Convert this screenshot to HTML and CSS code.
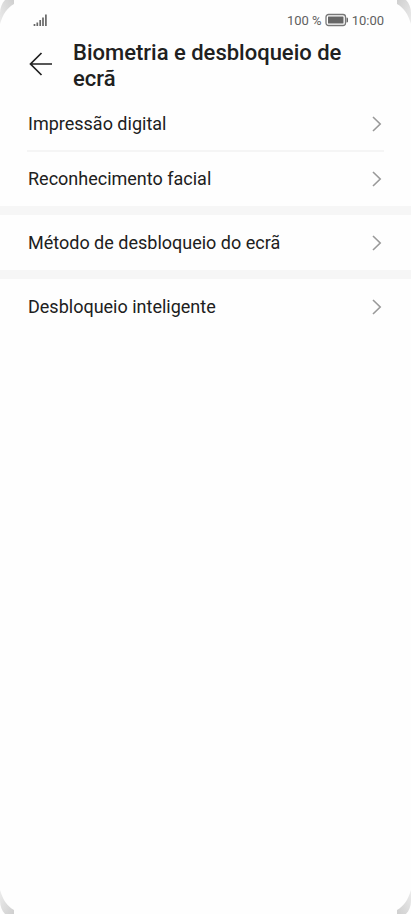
FILE: index.html
```html
<!DOCTYPE html>
<html lang="pt">
<head>
<meta charset="utf-8">
<meta name="viewport" content="width=device-width, initial-scale=1">
<title>Biometria e desbloqueio de ecrã</title>
<link rel="stylesheet" href="styles.css">
</head>
<body>
<svg class="corner top left" viewBox="0 0 14 26" aria-hidden="true"><defs><linearGradient id="edge" x1="1" y1="0" x2="0" y2="1"><stop offset="0" stop-color="#cfcfcf"/><stop offset="1" stop-color="#ececec"/></linearGradient></defs><path fill="url(#edge)" d="M5 0H14V4C7 8 3 14 0 24V13C0 8 2 3 5 0Z"/></svg>
<svg class="corner top right" viewBox="0 0 14 26" aria-hidden="true"><path fill="url(#edge)" d="M5 0H14V4C7 8 3 14 0 24V13C0 8 2 3 5 0Z"/></svg>
<svg class="corner bottom left" viewBox="0 0 14 26" aria-hidden="true"><path fill="url(#edge)" d="M5 0H14V4C7 8 3 14 0 24V13C0 8 2 3 5 0Z"/></svg>
<svg class="corner bottom right" viewBox="0 0 14 26" aria-hidden="true"><path fill="url(#edge)" d="M5 0H14V4C7 8 3 14 0 24V13C0 8 2 3 5 0Z"/></svg>

<div class="status">
  <svg class="signal" viewBox="0 0 14 12" aria-hidden="true"><path d="M1.500 10v2M4.300 8.500V12M7.200 6v6M10 3.500V12M12.900 0.500V12"/></svg>
  <div class="status-info">
    <span>100 %</span>
    <svg class="battery" viewBox="0 0 24 14" aria-hidden="true"><rect class="shell" x="1" y="1.5" width="19.5" height="11" rx="2.5"/><rect class="charge" x="3" y="3.5" width="15.5" height="7" rx="0.5"/><path class="cap" d="M21.500 4.500q1.500 0 1.500 1v3q0 1-1.500 1z"/></svg>
    <span>10:00</span>
  </div>
</div>

<header class="header">
  <button class="back" type="button" aria-label="Voltar">
    <svg viewBox="0 0 24 24" aria-hidden="true"><path d="M23.500 12H2M13 1L2 12L13 23"/></svg>
  </button>
  <h1>Biometria e desbloqueio de ecrã</h1>
</header>

<main>
  <nav class="group">
    <a class="row" href="#">Impressão digital<svg class="chevron" viewBox="0 0 10 16" aria-hidden="true"><path d="M1 1L8.200 8L1 15"/></svg></a>
    <a class="row" href="#">Reconhecimento facial<svg class="chevron" viewBox="0 0 10 16" aria-hidden="true"><path d="M1 1L8.200 8L1 15"/></svg></a>
  </nav>
  <nav class="group">
    <a class="row" href="#">Método de desbloqueio do ecrã<svg class="chevron" viewBox="0 0 10 16" aria-hidden="true"><path d="M1 1L8.200 8L1 15"/></svg></a>
  </nav>
  <nav class="group">
    <a class="row" href="#">Desbloqueio inteligente<svg class="chevron" viewBox="0 0 10 16" aria-hidden="true"><path d="M1 1L8.200 8L1 15"/></svg></a>
  </nav>
</main>
</body>
</html>
```
FILE: styles.css
```css
* {
  box-sizing: border-box;
}

body {
  margin: 0;
  min-height: 100vh;
  position: relative;
  background: #fefefe;
  color: #202020;
  font-family: Roboto, "Noto Sans", sans-serif;
}

svg {
  display: block;
  fill: none;
}

.corner {
  position: absolute;
  width: 14px;
  height: 26px;
}

.top { top: 0; }
.bottom { bottom: 0; }
.left { left: 0; }
.right { right: 0; }
.top.right { transform: scaleX(-1); }
.bottom.left { transform: scaleY(-1); }
.bottom.right { transform: scale(-1); }

.status {
  display: flex;
  align-items: center;
  justify-content: space-between;
  height: 40px;
  padding: 0 27px 0 33px;
  font-size: 13px;
  color: #606060;
}

.status-info {
  display: flex;
  align-items: center;
  gap: 3px;
}

.signal {
  width: 14px;
  height: 12px;
  stroke: #686868;
  stroke-width: 1.7;
}

.battery {
  width: 24px;
  height: 14px;
}

.shell {
  stroke: #777;
  stroke-width: 1.3;
}

.charge,
.cap {
  fill: #666;
}

.header {
  display: flex;
  align-items: flex-start;
  gap: 20px;
  padding: 0 28px;
}

.back {
  flex: none;
  margin: 12px 0 0;
  padding: 0;
  border: 0;
  background: none;
}

.back svg {
  width: 25px;
  height: 24px;
  stroke: #202020;
  stroke-width: 1.7;
}

h1 {
  margin: 0;
  font-size: 22px;
  line-height: 26px;
  font-weight: 500;
}

main {
  padding-top: 4px;
}

.group + .group {
  border-top: 9px solid #f6f6f6;
}

.row {
  display: flex;
  align-items: center;
  justify-content: space-between;
  height: 55px;
  margin: 0 27px;
  padding: 0 2px 0 1px;
  color: inherit;
  font-size: 18px;
  text-decoration: none;
}

.row + .row {
  box-shadow: 0 -1px #f5f5f5, inset 0 1px #f5f5f5;
}

.chevron {
  width: 10px;
  height: 16px;
  stroke: #999;
  stroke-width: 1.6;
}
```
